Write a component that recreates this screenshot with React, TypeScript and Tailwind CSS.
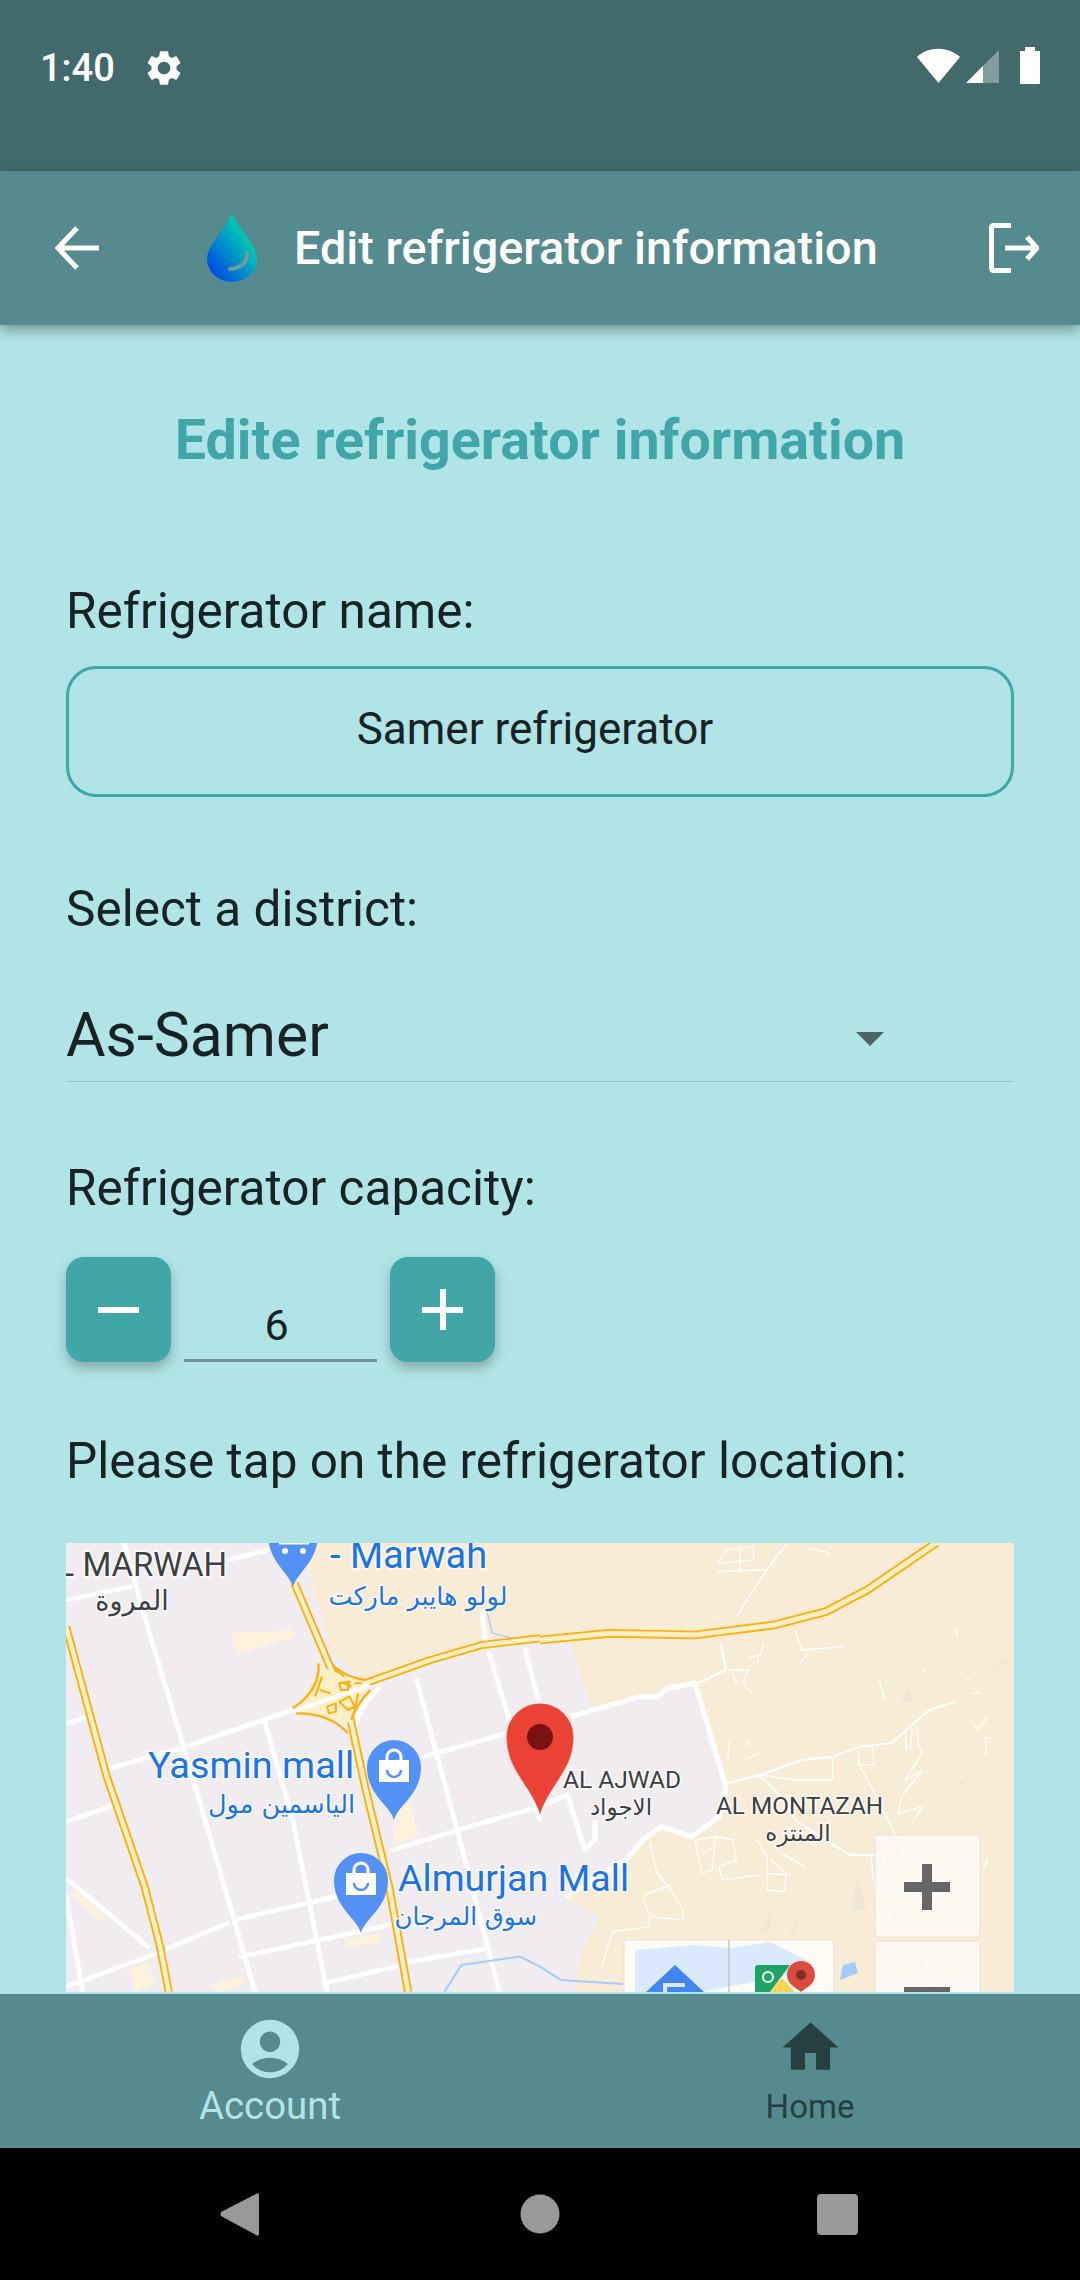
import { MdAccountCircle, MdHome, MdSettings } from "react-icons/md";

const arabic = "'DejaVu Sans', 'Noto Sans', sans-serif";

const labels = [
    { text: "AL MARWAH", x: 227, y: 1576, size: 33, anchor: "end", fill: "#3c4043" },
    { text: "المروة", x: 132, y: 1610, size: 27, anchor: "middle", fill: "#3c4043", font: arabic },
    { text: "- Marwah", x: 330, y: 1568, size: 38, anchor: "start", fill: "#1a73e8" },
    { text: "لولو هايبر ماركت", x: 418, y: 1605, size: 25.500, anchor: "middle", fill: "#1a73e8", font: arabic },
    { text: "Yasmin mall", x: 148, y: 1778, size: 37.800, anchor: "start", fill: "#1a73e8" },
    { text: "الياسمين مول", x: 355, y: 1813, size: 25.500, anchor: "end", fill: "#1a73e8", font: arabic },
    { text: "Almurjan Mall", x: 398, y: 1891, size: 37.600, anchor: "start", fill: "#1a73e8" },
    { text: "سوق المرجان", x: 537, y: 1925, size: 24.500, anchor: "end", fill: "#1a73e8", font: arabic },
    { text: "AL AJWAD", x: 563, y: 1788, size: 24.500, anchor: "start", fill: "#3c4043" },
    { text: "الاجواد", x: 621, y: 1815, size: 23, anchor: "middle", fill: "#3c4043", font: arabic },
    { text: "AL MONTAZAH", x: 716, y: 1814, size: 24.300, anchor: "start", fill: "#3c4043" },
    { text: "المنتزه", x: 798, y: 1841, size: 23, anchor: "middle", fill: "#3c4043", font: arabic },
];

const leftRoads = [
    "M360 69 L420 290 L530 670 L680 1200 L740 1416",
    "M320 745 L540 680 L850 570",
    "M192 610 L245 595",
    "M192 905 L320 860",
    "M770 610 L850 900 L950 1416",
    "M1210 480 L1330 940 L1450 1416",
    "M1420 400 L1568 900",
    "M1525 390 L1568 560",
    "M1230 710 L1470 640",
    "M1140 990 L1330 930 L1568 860",
    "M680 1200 L975 1130",
    "M192 1400 L430 1310 L660 1210",
    "M700 1310 L1130 1215",
    "M940 1390 L1150 1340",
    "M1190 1325 L1420 1285",
    "M192 240 L380 200",
    "M660 120 L800 85",
    "M1100 505 Q1050 550 1025 630",
    "M192 1075 L430 1280",
    "M192 1130 L240 1416",
    "M1400 280 L1410 370",
];

const rightRoads = [
    "M90 590 L290 530 L340 530 L370 505 L450 490 L540 800 L520 890 L440 950 L350 920 L300 960 L250 1020 L75 1130",
    "M0 860 L80 825 L130 990 L160 960 L160 900",
    "M450 490 L480 480 L540 450 L525 370",
    "M540 790 L640 765 L760 720 L850 710 L930 680 L1020 670 L1130 570 L1205 545",
    "M630 765 Q690 800 740 900 L830 960 L900 1005 L1000 1005",
];

const thinRoads = [
    "M515 130 L620 120 L620 80 L540 90 Z M580 90 L580 150 M515 155 L650 150",
    "M655 155 L690 105 L720 69 M655 155 L570 290",
    "M780 85 L830 95 L840 110",
    "M740 330 L760 390 L880 380 M780 400 L750 435",
    "M605 415 L640 405 L650 370 M630 405 L635 430",
    "M550 450 L605 450 L590 490 L615 520 M560 460 L570 490",
    "M985 480 L1000 540",
    "M1250 595 L1270 630 L1300 590 M1285 650 L1310 655 M1295 650 L1295 705",
    "M850 710 L850 780 L740 780 L640 765",
    "M925 690 L925 735 L970 735 L965 680 M930 740 L1000 880 L1060 1000",
    "M1060 630 L1065 690 M1080 625 L1075 690 M1095 620 L1100 680 L1110 700 L1060 780 L1110 750 L1050 830 L1040 880 L1110 860 L1080 910",
    "M450 960 L510 950 L500 1050 L470 1060 L450 960 M470 1000 L510 980 M510 950 L560 960 L570 1020 L520 1040 L530 1080 L640 1065",
    "M630 960 L660 1010 L660 1110 L710 1115 L715 1060 L670 1020 M660 1060 L730 1065 M700 1000 L770 1040",
    "M320 970 L340 1060 L380 1110 L415 1170 L415 1200 L320 1190 L300 1140 L310 1120 L380 1095",
    "M320 1190 L315 1220 L210 1235 L180 1340",
    "M960 1010 L990 1230 M1000 1010 L1020 1230 M975 1060 L1100 1060 M980 1120 L1100 1120 M980 1180 L1100 1160",
    "M1100 1270 L1150 1400 M1160 1320 L1250 1380 M1180 1300 L1240 1340",
    "M1210 325 L1210 350 M1115 445 L1118 460 M1235 475 L1250 475 M1255 520 L1280 518 M1290 1040 L1300 1015",
    "M600 660 L610 680 M550 665 L545 715 M605 715 L635 700",
];

// blue shop pin with the little bag on it
function ShopPin({ x, y }: { x: number; y: number }) {
    return (
        <g transform={`translate(${x} ${y})`}>
            <path d="M0 53 C-4 38 -27 28 -27 0 A27 27 0 0 1 27 0 C27 28 4 38 0 53 Z" fill="#5491f5" />
            <path d="M-15 -7 H15 V15 H-15 Z" fill="#fff" />
            <path d="M-7 -7 V-10 A7 7 0 0 1 7 -10 V-7" fill="none" stroke="#fff" strokeWidth={3} />
            <path d="M-7 3 A7 7 0 0 0 7 3" fill="none" stroke="#5491f5" strokeWidth={2.500} />
        </g>
    );
}

function MapDrawing() {
    return (
        <svg viewBox="66 1543 948 449" className="block w-full h-full">
            <rect x={66} y={1543} width={948} height={449} fill="#f8ecd6" />
            <path
                d="M66 1543 L303 1543 L331 1653 L365 1680 L537 1637 L571 1643 L592 1707 L657 1697 L695 1683 L726 1787 L719 1817 L692 1837 L661 1827 L643 1840 L626 1860 L566 1897 L599 1917 L581 1953 L574 1992 L66 1992 Z"
                fill="#f0ecf0"
            />
            <g transform="translate(0 1520) scale(.3444 .3333)">
                <g fill="#fdf3dd">
                    <path d="M675 340 L850 330 L855 350 L710 395 L690 395 Z" />
                    <path d="M1160 860 L1190 850 L1215 950 L1140 975 Z" />
                    <path d="M375 1350 L430 1325 L450 1395 L395 1416 Z" />
                    <path d="M205 1125 L225 1115 L305 1190 L290 1205 Z" />
                    <path d="M1000 1260 L1100 1240 L1100 1265 L1005 1285 Z" />
                    <path d="M600 1400 L700 1370 L710 1390 L640 1416 Z" />
                </g>
                <g fill="none" stroke="#fff" strokeWidth={14} strokeLinecap="round" strokeLinejoin="round">
                    {leftRoads.map((d) => (
                        <path key={d} d={d} />
                    ))}
                </g>
                <path d="M1290 1416 L1340 1335 L1510 1310 L1568 1340" fill="none" stroke="#a3cbfc" strokeWidth={6} />
                <path d="M1415 280 L1430 340 L1490 355" fill="none" stroke="#a3cbfc" strokeWidth={4} />
                <g fill="none" strokeLinejoin="round">
                    <path d="M192 320 L310 770 L420 1100 L465 1280 L490 1416" stroke="#fcb00c" strokeWidth={24} />
                    <path d="M192 320 L310 770 L420 1100 L465 1280 L490 1416" stroke="#feefc8" strokeWidth={13} />
                    <path d="M855 190 L950 420 L1010 560 L1060 800 L1130 1100 L1185 1416" stroke="#fcb00c" strokeWidth={24} />
                    <path d="M855 190 L950 420 L1010 560 L1060 800 L1130 1100 L1185 1416" stroke="#feefc8" strokeWidth={13} />
                    <path d="M1060 490 L1250 420 L1400 375 L1568 355" stroke="#fcb00c" strokeWidth={24} />
                    <path d="M1060 490 L1250 420 L1400 375 L1568 355" stroke="#feefc8" strokeWidth={13} />
                    {/* interchange */}
                    <path d="M930 440 L1070 490 L1020 610 L860 572 Z" fill="#feefc8" stroke="none" />
                    <path d="M860 572 L1075 495" stroke="#fff" strokeWidth={12} />
                    <path d="M925 430 Q930 510 850 565 M965 435 Q1000 470 1060 480 M1075 510 Q1030 560 1020 600 M860 580 Q960 580 1010 640" stroke="#fcb00c" strokeWidth={7} />
                    <path d="M975 450 L1000 470 M1000 490 L1020 500 M1030 490 L1050 490 M935 470 L915 530 M930 510 L960 520 M985 545 L1015 530 L1030 560 L1010 570 Z M950 560 L975 550 L975 575 L955 580 Z M985 490 L1015 485 L1010 510 L990 510 Z M1040 520 L1030 570" stroke="#fcb00c" strokeWidth={6} />
                </g>
            </g>
            <g transform="translate(540 1520) scale(.3444 .3333)">
                <g fill="#efe6d8">
                    <path d="M1280 470 L1373 415 L1340 425 L1290 465 Z" />
                    <path d="M1045 545 L1070 505 L1080 545 Z" />
                    <path d="M900 1170 L925 1070 L945 1170 Z" />
                    <path d="M635 1240 L670 1170 L670 1230 Z" />
                    <path d="M720 1250 L750 1190 L745 1240 Z" />
                    <path d="M1215 810 L1250 770 L1220 780 Z" />
                </g>
                <g fill="none" stroke="#fff" strokeWidth={13} strokeLinejoin="round">
                    {rightRoads.map((d) => (
                        <path key={d} d={d} strokeWidth={d.startsWith("M90") ? 15 : d.startsWith("M0") ? 14 : 6} />
                    ))}
                </g>
                <g fill="none" stroke="#fff" strokeWidth={4} strokeLinejoin="round">
                    {thinRoads.map((d) => (
                        <path key={d} d={d} />
                    ))}
                </g>
                <path d="M0 1340 L60 1380 L240 1392" fill="none" stroke="#a3cbfc" strokeWidth={6} />
                <path d="M0 360 L200 340 L450 345 L680 315 L830 275 L950 210 L1150 69" fill="none" stroke="#fcb00c" strokeWidth={26} />
                <path d="M0 360 L200 340 L450 345 L680 315 L830 275 L950 210 L1150 69" fill="none" stroke="#feefc8" strokeWidth={15} />
            </g>

            {labels.map((l) => (
                <text
                    key={l.text}
                    x={l.x}
                    y={l.y}
                    fontSize={l.size}
                    textAnchor={l.anchor as "start" | "middle" | "end"}
                    fill={l.fill}
                    stroke="#ffffff"
                    strokeOpacity={0.75}
                    strokeWidth={3}
                    paintOrder="stroke"
                    fontFamily={l.font ?? "Roboto, sans-serif"}
                >
                    {l.text}
                </text>
            ))}

            {/* cut off pin at the top */}
            <g transform="translate(293 1534)">
                <path d="M0 53 C-4 38 -25 28 -25 0 A25 25 0 0 1 25 0 C25 28 4 38 0 53 Z" fill="#5491f5" />
                <circle cx={-8} cy={17} r={3} fill="#fff" />
                <circle cx={10} cy={17} r={3} fill="#fff" />
                <path d="M-14 9 H16" stroke="#fff" strokeWidth={3} />
            </g>
            <ShopPin x={394} y={1767} />
            <ShopPin x={361} y={1880} />

            {/* selected marker */}
            <path
                d="M540 1816 C532 1786 506 1772 506 1737 A34 34 0 0 1 574 1737 C574 1772 548 1786 540 1816 Z"
                fill="#ea4335"
                stroke="#fff"
                strokeOpacity={0.6}
                strokeWidth={1.500}
            />
            <circle cx={540} cy={1737} r={13} fill="#7b1212" />

            {/* zoom buttons */}
            <g>
                <rect x={875} y={1835} width={105} height={102} rx={3} fill="#fefcf7" fillOpacity={0.85} stroke="#d8cfc0" strokeOpacity={0.5} />
                <rect x={875} y={1941} width={105} height={60} rx={3} fill="#fefcf7" fillOpacity={0.85} stroke="#d8cfc0" strokeOpacity={0.5} />
                <path d="M904 1887 H950 M927 1864 V1910" stroke="#666" strokeWidth={10} />
                <rect x={904} y={1987} width={46} height={10} fill="#666" />
            </g>

            {/* open in maps buttons */}
            <g>
                <rect x={624} y={1940} width={210} height={70} rx={3} fill="#fefcf7" fillOpacity={0.9} stroke="#d8cfc0" strokeOpacity={0.5} />
                <path d="M635 1950 L695 1945 L730 1948 L770 1942 L815 1965 L790 1975 L700 1992 L635 1992 Z" fill="#dbe9fd" />
                <path d="M843 1965 L855 1962 L858 1973 L840 1980 Z" fill="#a3cbfc" />
                <path d="M729 1940 V1992" stroke="#c9c5bd" strokeWidth={1.500} />
                <path d="M675 1965 L646 1992 H704 Z" fill="#4285f4" />
                <path d="M665 1992 V1985 H685" stroke="#dbe9fd" strokeWidth={4} fill="none" />
                <path d="M755 1968 Q755 1965 758 1965 H790 L770 1992 H755 Z" fill="#1fa463" />
                <path d="M770 1992 L782 1978 L795 1992 Z" fill="#fbd34e" />
                <circle cx={768} cy={1977} r={5} fill="none" stroke="#fff" strokeWidth={2} />
                <path d="M801 1992 C797 1988 787 1985 787 1975 A14 14 0 0 1 815 1975 C815 1985 805 1988 801 1992 Z" fill="#dd4b3e" />
                <circle cx={801} cy={1975} r={5} fill="#802d27" />
            </g>
        </svg>
    );
}

export default function App() {
    return (
        <div className="w-[1080px] h-[2280px] flex flex-col bg-black overflow-hidden font-['Roboto',sans-serif]">
            {/* Status bar */}
            <div className="h-[171px] shrink-0 bg-[#426a6c] flex items-start justify-between pt-[46px] pl-[40px] pr-[40px] text-white">
                <div className="flex items-center gap-[28px]">
                    <span className="text-[38px] leading-[44px] font-medium">1:40</span>
                    <MdSettings size={42} />
                </div>
                <svg width="124" height="38" viewBox="0 0 124 38" className="mt-[1px]">
                    <path d="M1 10 C12 -1 32 -1 44 10 L22.500 36 Z" fill="#fff" />
                    <path d="M50 36 L83 3 V36 Z" fill="#fff" fillOpacity={0.35} />
                    <path d="M50 36 L67 19 V36 Z" fill="#fff" />
                    <path d="M109 3 H116 V1 H109 Z M104 4 H124 V36 Q124 37 123 37 H105 Q104 37 104 36 Z" fill="#fff" />
                    <rect x={109} y={0} width={10} height={5} fill="#fff" />
                </svg>
            </div>

            {/* App bar */}
            <div className="relative z-10 h-[154px] shrink-0 bg-[#558b8e] shadow-[0_5px_12px_rgba(0,0,0,0.35)] flex items-center text-white">
                <svg width="46" height="44" viewBox="0 0 46 44" className="ml-[55px]">
                    <path d="M44 22 H4 M22 2 L3 22 L22 42" fill="none" stroke="#fff" strokeWidth={5} />
                </svg>
                <svg width="50" height="68" viewBox="0 0 50 68" className="ml-[106px]">
                    <defs>
                        <linearGradient id="drop" x1="0.9" y1="0.1" x2="0.1" y2="0.9">
                            <stop offset="0.1" stopColor="#00dcae" />
                            <stop offset="0.95" stopColor="#0050e0" />
                        </linearGradient>
                    </defs>
                    <path d="M25 0 C30 12 50 32 50 45 A25 23 0 0 1 0 45 C0 32 20 12 25 0 Z" fill="url(#drop)" />
                    <path d="M40 39 C40 49 34 54 23 55" fill="none" stroke="#6f9a9d" strokeWidth={4} strokeLinecap="round" />
                </svg>
                <span className="ml-[37px] text-[46.800px] leading-[56px] font-medium whitespace-nowrap">Edit refrigerator information</span>
                <svg width="50" height="50" viewBox="0 0 50 50" className="ml-auto mr-[41px]">
                    <path d="M22 2.500 H5 Q2.500 2.500 2.500 5 V45 Q2.500 47.500 5 47.500 H22" fill="none" stroke="#fff" strokeWidth={5} />
                    <path d="M16 25 H46 M38 14 L48 25 L38 36" fill="none" stroke="#fff" strokeWidth={5} />
                </svg>
            </div>

            {/* Form */}
            <main className="flex-1 min-h-0 overflow-hidden bg-[#b0e4e6] px-[66px] text-[#172224]">
                <h1 className="mt-[85px] text-center text-[55.600px] leading-[60px] font-bold text-[#40a6a6] whitespace-nowrap">
                    Edite refrigerator information
                </h1>
                <p className="mt-[113px] text-[49.500px] leading-[56px]">Refrigerator name:</p>
                <div className="mt-[27px] h-[131px] border-[3px] border-[#40a6a6] rounded-[30px] flex items-center justify-center pr-[10px] pb-[6px] text-[44px]">
                    Samer refrigerator
                </div>
                <p className="mt-[84px] text-[49.500px] leading-[56px]">Select a district:</p>
                <div className="h-[145px] border-b border-[#96c3c6] flex items-end justify-between pb-[9px] pr-[130px]">
                    <span className="text-[60.700px] leading-[72px]">As-Samer</span>
                    <span className="mb-[26px] w-0 h-0 border-x-[14px] border-x-transparent border-t-[14px] border-t-[#4d6466]" />
                </div>
                <p className="mt-[78px] text-[49.500px] leading-[56px]">Refrigerator capacity:</p>
                <div className="mt-[41px] flex items-end">
                    <button className="w-[105px] h-[105px] rounded-[18px] bg-[#40a6a6] shadow-[0_6px_12px_rgba(0,0,0,0.25)] flex items-center justify-center">
                        <span className="w-[41px] h-[6px] bg-white" />
                    </button>
                    <div className="ml-[13px] w-[193px] h-[70px] border-b-[3px] border-[#6f9295] text-center text-[43px] leading-[66px] pr-[8px]">
                        6
                    </div>
                    <button className="relative ml-[13px] w-[105px] h-[105px] rounded-[18px] bg-[#40a6a6] shadow-[0_6px_12px_rgba(0,0,0,0.25)] flex items-center justify-center">
                        <span className="w-[41px] h-[6px] bg-white" />
                        <span className="absolute w-[6px] h-[41px] bg-white" />
                    </button>
                </div>
                <p className="mt-[71px] text-[49.500px] leading-[56px]">Please tap on the refrigerator location:</p>
                <div className="mt-[54px] h-[449px]">
                    <MapDrawing />
                </div>
            </main>

            {/* Bottom tabs */}
            <nav className="h-[154px] shrink-0 bg-[#558b8e] grid grid-cols-2">
                <div className="flex flex-col items-center pt-[20px] text-[#b0e4e6]">
                    <MdAccountCircle size={70} />
                    <span className="text-[38.400px] leading-[44px]">Account</span>
                </div>
                <div className="flex flex-col items-center pt-[20px] text-[#263f40]">
                    <MdHome size={67} />
                    <span className="text-[33px] leading-[40px] mt-[6px]">Home</span>
                </div>
            </nav>

            {/* System navigation */}
            <div className="h-[132px] shrink-0 bg-black">
                <svg width="1080" height="132" viewBox="0 0 1080 132" className="block">
                    <path d="M259 47 Q259 44 256 46 L221 64 Q220 66 221 68 L256 87 Q259 89 259 86 Z" fill="#999" />
                    <circle cx={540} cy={66} r={19.500} fill="#999" />
                    <rect x={817} y={46} width={41} height={41} rx={4} fill="#999" />
                </svg>
            </div>
        </div>
    );
}
